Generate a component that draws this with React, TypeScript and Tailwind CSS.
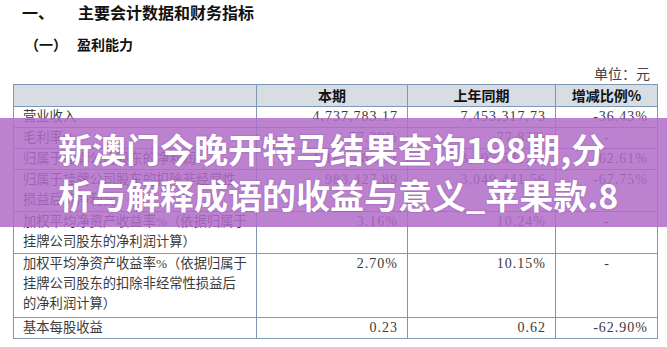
import React from "react";

const serif = "font-['Liberation_Serif','Noto_Sans_CJK_SC',serif]";
const base = "border border-[#7e98b4] px-[9px] align-top leading-[20px] text-[#3b3b3b]";
const cell = `${base} text-[14px]`;
const num = "text-right tracking-[1px]";

type Row = { label: React.ReactNode; cur: string; prev: string; ratio: string; h: string };

const rows: Row[] = [
  { label: "营业收入", cur: "4,737,783.17", prev: "7,453,317.73", ratio: "-36.43%", h: "h-[21px]" },
  { label: "毛利率%", cur: "77.38%", prev: "77.82%", ratio: "-", h: "h-[21px]" },
  { label: "归属于挂牌公司股东的净利润", cur: "1,163,482.32", prev: "3,107,531.32", ratio: "-62.61%", h: "h-[21px]" },
  {
    label: (
      <>
        归属于挂牌公司股东的扣除非经常性
        <br />
        损益后的净利润
      </>
    ),
    cur: "983,427.89",
    prev: "3,049,441.56",
    ratio: "-67.75%",
    h: "h-[42px]",
  },
  {
    label: (
      <>
        加权平均净资产收益率%（依据归属于
        <br />
        挂牌公司股东的净利润计算）
      </>
    ),
    cur: "3.16%",
    prev: "10.24%",
    ratio: "-",
    h: "h-[42px]",
  },
  {
    label: (
      <>
        加权平均净资产收益率%（依据归属于
        <br />
        挂牌公司股东的扣除非经常性损益后
        <br />
        的净利润计算）
      </>
    ),
    cur: "2.70%",
    prev: "10.15%",
    ratio: "-",
    h: "h-[64px]",
  },
  { label: "基本每股收益", cur: "0.23", prev: "0.62", ratio: "-62.90%", h: "h-[21px]" },
];

export default function App() {
  return (
    <div className={`relative w-[667px] h-[347px] overflow-hidden bg-white ${serif}`}>
      <div className="flex flex-col">
        <div className="flex items-center h-[24px] pl-[22px] font-['Noto_Sans_CJK_SC',sans-serif] font-bold text-[16px] text-[#111]">
          <span className="w-[56px]">一、</span>
          <span>主要会计数据和财务指标</span>
        </div>
        <div className="flex items-center h-[16px] mt-[12px] pl-[25px] font-['Noto_Sans_CJK_SC',sans-serif] font-bold text-[14px] text-[#111]">
          <span className="w-[52px]">（一）</span>
          <span>盈利能力</span>
        </div>
        <div className="flex justify-end pr-[17px] mt-[14px] h-[16px] items-center text-[14px] text-[#444]">
          单位：元
        </div>
        <table className="ml-[13px] mt-[2px] w-[644px] border-collapse table-fixed">
          <colgroup>
            <col className="w-[243px]" />
            <col className="w-[151px]" />
            <col className="w-[148px]" />
            <col className="w-[102px]" />
          </colgroup>
          <thead>
            <tr className="h-[22px] bg-[#d8dde4]">
              <th className={`${cell} text-center font-bold text-[#111]`}></th>
              <th className={`${cell} text-center font-bold text-[#111] font-['Noto_Sans_CJK_SC',sans-serif]`}>本期</th>
              <th className={`${cell} text-center font-bold text-[#111] font-['Noto_Sans_CJK_SC',sans-serif]`}>上年同期</th>
              <th className={`${cell} text-center font-bold text-[#111] font-['Noto_Sans_CJK_SC',sans-serif]`}>增减比例%</th>
            </tr>
          </thead>
          <tbody>
            {rows.map((r, i) => (
              <tr key={i} className={r.h}>
                <td className={`${base} whitespace-nowrap text-[13.3px]`}>{r.label}</td>
                <td className={`${cell} ${num}`}>{r.cur}</td>
                <td className={`${cell} ${num}`}>{r.prev}</td>
                <td className={`${cell} ${r.ratio === "-" ? "text-center" : num}`}>{r.ratio}</td>
              </tr>
            ))}
          </tbody>
        </table>
      </div>

      <div className="absolute left-0 right-0 top-[118px] h-[109px] bg-[rgba(176,108,200,0.85)] pl-[58px] pt-[8px] font-['Noto_Sans_CJK_SC',sans-serif] font-bold text-white text-[34px] leading-[46px] whitespace-nowrap [text-shadow:0_0_2px_rgba(80,30,100,0.4)]">
        <div>新澳门今晚开特马结果查询198期,分</div>
        <div>析与解释成语的收益与意义_苹果款.8</div>
      </div>
    </div>
  );
}
